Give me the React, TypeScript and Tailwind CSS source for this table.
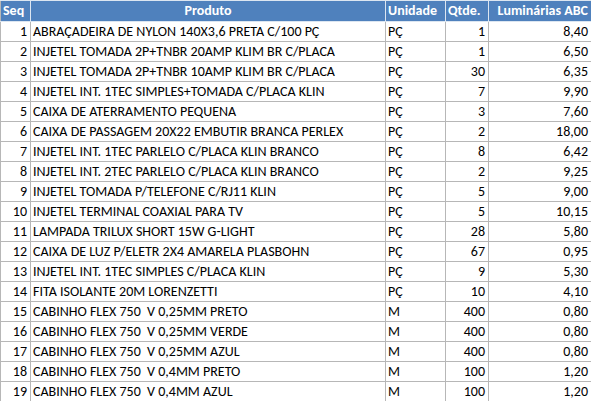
const rows: [number, string, string, number, string][] = [
  [1, 'ABRAÇADEIRA DE NYLON 140X3,6 PRETA C/100 PÇ', 'PÇ', 1, '8,40'],
  [2, 'INJETEL TOMADA 2P+TNBR 20AMP KLIM BR C/PLACA', 'PÇ', 1, '6,50'],
  [3, 'INJETEL TOMADA 2P+TNBR 10AMP KLIM BR C/PLACA', 'PÇ', 30, '6,35'],
  [4, 'INJETEL INT. 1TEC SIMPLES+TOMADA C/PLACA KLIN', 'PÇ', 7, '9,90'],
  [5, 'CAIXA DE ATERRAMENTO PEQUENA', 'PÇ', 3, '7,60'],
  [6, 'CAIXA DE PASSAGEM 20X22 EMBUTIR BRANCA PERLEX', 'PÇ', 2, '18,00'],
  [7, 'INJETEL INT. 1TEC PARLELO C/PLACA KLIN BRANCO', 'PÇ', 8, '6,42'],
  [8, 'INJETEL INT. 2TEC PARLELO C/PLACA KLIN BRANCO', 'PÇ', 2, '9,25'],
  [9, 'INJETEL TOMADA P/TELEFONE C/RJ11 KLIN', 'PÇ', 5, '9,00'],
  [10, 'INJETEL TERMINAL COAXIAL PARA TV', 'PÇ', 5, '10,15'],
  [11, 'LAMPADA TRILUX SHORT 15W G-LIGHT', 'PÇ', 28, '5,80'],
  [12, 'CAIXA DE LUZ P/ELETR 2X4 AMARELA PLASBOHN', 'PÇ', 67, '0,95'],
  [13, 'INJETEL INT. 1TEC SIMPLES C/PLACA KLIN', 'PÇ', 9, '5,30'],
  [14, 'FITA ISOLANTE 20M LORENZETTI', 'PÇ', 10, '4,10'],
  [15, 'CABINHO FLEX 750  V 0,25MM PRETO', 'M', 400, '0,80'],
  [16, 'CABINHO FLEX 750  V 0,25MM VERDE', 'M', 400, '0,80'],
  [17, 'CABINHO FLEX 750  V 0,25MM AZUL', 'M', 400, '0,80'],
  [18, 'CABINHO FLEX 750  V 0,4MM PRETO', 'M', 100, '1,20'],
  [19, 'CABINHO FLEX 750  V 0,4MM AZUL', 'M', 100, '1,20'],
]

export default function App() {
  return (
    <div className="w-[591px] h-[401px] bg-white overflow-hidden font-['Carlito','Open_Sans',sans-serif] text-[14px] text-black">
      <table className="border-collapse table-fixed w-[591px]">
        <colgroup>
          <col className="w-[30px]" />
          <col className="w-[355px]" />
          <col className="w-[60px]" />
          <col className="w-[43px]" />
          <col className="w-[103px]" />
        </colgroup>
        <thead>
          <tr className="h-[21px] bg-[#4f81bd] text-white">
            <th className="border border-[#dce6f1] border-l-[#b7b7b7] px-[2px] text-left font-bold leading-none">Seq</th>
            <th className="border border-[#dce6f1] px-[2px] text-center font-bold leading-none">Produto</th>
            <th className="border border-[#dce6f1] px-[2px] text-left font-bold leading-none">Unidade</th>
            <th className="border border-[#dce6f1] px-[2px] text-left font-bold leading-none">Qtde.</th>
            <th className="border border-[#dce6f1] border-r-[#b7b7b7] px-[3px] text-right font-bold leading-none">Luminárias ABC</th>
          </tr>
        </thead>
        <tbody>
          {rows.map(([seq, produto, unidade, qtde, preco]) => (
            <tr key={seq} className="h-[20px]">
              <td className="border border-[#b7b7b7] px-[3px] text-right leading-none">{seq}</td>
              <td className="border border-[#b7b7b7] px-[2px] whitespace-pre leading-none">{produto}</td>
              <td className="border border-[#b7b7b7] px-[2px] leading-none">{unidade}</td>
              <td className="border border-[#b7b7b7] px-[3px] text-right leading-none">{qtde}</td>
              <td className="border border-[#b7b7b7] px-[3px] text-right leading-none">{preco}</td>
            </tr>
          ))}
        </tbody>
      </table>
    </div>
  )
}
